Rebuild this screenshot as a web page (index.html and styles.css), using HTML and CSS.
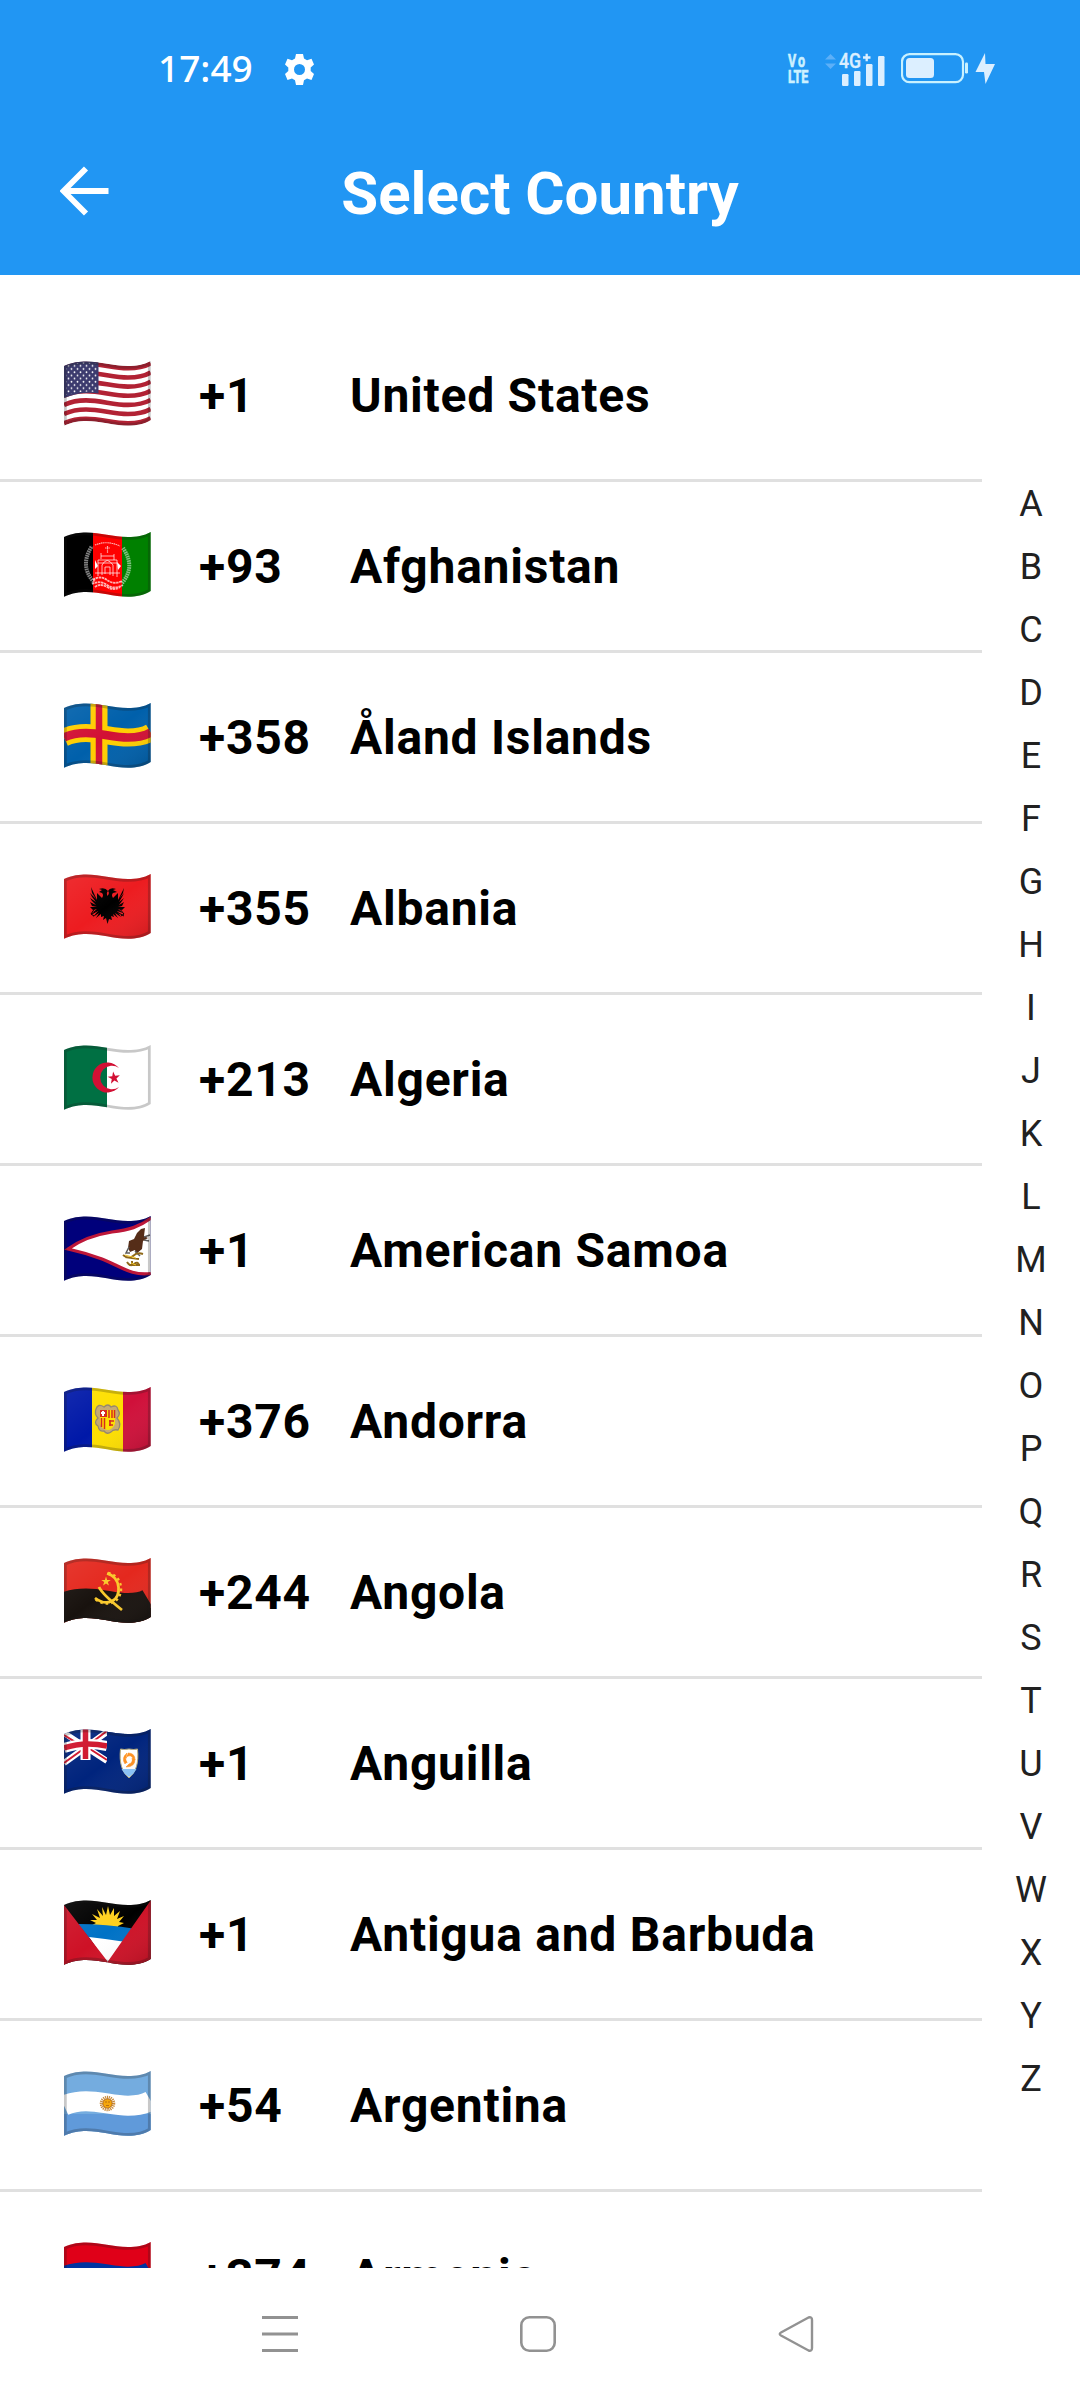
FILE: index.html
```html
<!DOCTYPE html>
<html lang="en">
<head>
<meta charset="utf-8">
<title>Select Country</title>
<link rel="stylesheet" href="styles.css">
</head>
<body>
<svg class="defs" width="0" height="0" aria-hidden="true">
  <defs>
    <clipPath id="cloth"><path d="M0 5C8 1.2 16 .5 22 .5C37 .5 49 5 64 5C72 5 80 4 86.7 0V59C80 63.500 72 64.700 64 64.700C49 64.700 37 60 22 60C16 60 8 61 0 64.700Z"/></clipPath>
    <linearGradient id="sheen" x1="0" y1="0" x2="1" y2="1"><stop offset="0" stop-color="#fff" stop-opacity=".08"/><stop offset=".5" stop-color="#fff" stop-opacity="0"/><stop offset="1" stop-color="#000" stop-opacity=".14"/></linearGradient>
    <path id="wave" d="M0 5C8 1.2 16 .5 22 .5C37 .5 49 5 64 5C72 5 80 4 86.700 0" fill="none"/>
    <path id="edge" d="M0 5C8 1.200 16 .5 22 .5C37 .5 49 5 64 5C72 5 80 4 86.700 0V59C80 63.500 72 64.700 64 64.700C49 64.700 37 60 22 60C16 60 8 61 0 64.700Z" fill="none" stroke="#1a1a1a" stroke-opacity=".24" stroke-width="5.500"/>
    <g id="shade"><path d="M0 0H87V65H0Z" fill="url(#sheen)"/><use href="#edge"/></g>
    <pattern id="stars" width="6" height="6.400" patternUnits="userSpaceOnUse"><circle cx="1.500" cy="1.600" r=".9" fill="#fff"/><circle cx="4.500" cy="4.800" r=".9" fill="#fff"/></pattern>
    <path id="star" d="M0-1L.225-.309H.951L.363.118.588.809 0 .382-.588.809-.363.118-.951-.309H-.225Z"/>
  </defs>
</svg>

<header class="top">
  <div class="status">
    <span class="clock">17:49</span>
    <svg class="gear" viewBox="0 0 29 31"><path fill="#fff" fill-rule="evenodd" d="M11 0H18L19 4.500 22 6.200 26.500 4.700 29 10.500 25.700 13.500V17L29 20 26.500 26 22 24.500 19 26.200 18 31H11L10 26.200 7 24.500 2.500 26 0 20 3.300 17V13.500L0 10.500 2.500 4.700 7 6.200 10 4.500ZM14.500 10A5.500 5.500 0 1 0 14.500 21A5.500 5.500 0 1 0 14.500 10Z"/></svg>
    <div class="indicators">
      <div class="volte"><span class="vo">Vo</span><span>LTE</span></div>
      <div class="signal">
        <svg viewBox="0 0 62 34"><path d="M0 7.500L5.500 2 11 7.500ZM0 11.500L5.500 17 11 11.500Z" fill="#5db0f8"/><g fill="#dcefff"><rect x="17" y="22" width="6.500" height="12" rx="1.200"/><rect x="29" y="19" width="6.500" height="15" rx="1.200"/><rect x="41" y="12" width="6.500" height="22" rx="1.200"/><rect x="53" y="4" width="6.500" height="30" rx="1.200"/></g><path d="M38 5.500H45.500M41.700 1.800V9.300" stroke="#dcefff" stroke-width="2.300"/></svg>
        <span class="net">4G</span>
      </div>
      <svg class="battery" viewBox="0 0 96 32"><rect x="1" y="1.200" width="61" height="28" rx="7.500" fill="none" stroke="#c8f1ff" stroke-width="2.200"/><rect x="5" y="5" width="28" height="20" rx="3.500" fill="#dcefff"/><rect x="64" y="9.500" width="3" height="11" rx="1.200" fill="#c8f1ff"/><path d="M84 0L74.500 19H83L84.500 31 94 11H84.500Z" fill="#dcefff"/></svg>
    </div>
  </div>
  <div class="bar">
    <svg class="back" viewBox="0 0 50 50"><path d="M26 2.500L3.500 25 26 47.500M4 25H48.500" fill="none" stroke="#fff" stroke-width="5.800"/></svg>
    <h1>Select Country</h1>
  </div>
</header>

<main class="content">
  <ul class="countries">
    <li><svg class="flag" viewBox="0 0 87 65"><g clip-path="url(#cloth)"><path fill="#fff" d="M0 0H87V65H0Z"/><g stroke="#b22234" stroke-width="4.580"><use href="#wave" y="2.300"/><use href="#wave" y="11.450"/><use href="#wave" y="20.600"/><use href="#wave" y="29.750"/><use href="#wave" y="38.900"/><use href="#wave" y="48.050"/><use href="#wave" y="57.200"/></g><path d="M0 0H34.500V32.500Q18 30 0 37Z" fill="#3c3b6e"/><path d="M2 5Q18-1 33 3V31Q18 29 2 34Z" fill="url(#stars)"/><use href="#edge"/></g></svg><span class="code">+1</span><span class="name">United States</span></li>

    <li><svg class="flag" viewBox="0 0 87 65"><g clip-path="url(#cloth)"><path d="M0 0H29V65H0Z"/><path fill="#f00" d="M29 0H58V65H29Z"/><path fill="#008000" d="M58 0H87V65H58Z"/><g fill="none" stroke="#fff" stroke-opacity=".7"><path d="M30 50Q15 34 28 14M58 51Q72 35 59 16" stroke-width="4" stroke-opacity=".5" stroke-dasharray="1.600 .7"/><path d="M31 13Q43 8 56 14M41 16H46M43.500 14V21" stroke-width="1.200" stroke-dasharray="1.500 .6"/><path d="M34 44V28H53V45M37 27V21M50 28V22M38 43V33Q43 24 49 33V44M34 31H53M31 41H56M41 42V35H46V43M37 24H50" stroke-width="1"/><path d="M29 48Q36 43 43 48T58 49M28 52Q36 48 43 53T59 53M31 55Q36 51 43 55T56 55" stroke-width="1.800" stroke-dasharray="2.500 .6"/></g><path d="M31 28L34 34 31 37ZM53 30L57 34 54 38Z" fill="#fff"/><use href="#edge"/></g></svg><span class="code">+93</span><span class="name">Afghanistan</span></li>

    <li><svg class="flag" viewBox="0 0 87 65"><g clip-path="url(#cloth)"><path fill="#0060ab" d="M0 0H87V65H0Z"/><path d="M35 0V65" stroke="#ffce00" stroke-width="17"/><use href="#wave" y="29.500" stroke="#ffce00" stroke-width="18"/><path d="M35 0V65" stroke="#d21034" stroke-width="6.500"/><use href="#wave" y="29.500" stroke="#d21034" stroke-width="8.500"/><use href="#shade"/></g></svg><span class="code">+358</span><span class="name">Åland Islands</span></li>

    <li><svg class="flag" viewBox="0 0 87 65"><g clip-path="url(#cloth)"><path fill="#ed1c20" d="M0 0H87V65H0Z"/><path d="M43.500 22Q42 19 44 17Q41 13 35 15L38 16 35 18 38 19Q40 21 38 24L33 19V26L27 13 28 19 32 25 26 19 28 23 32 28 26 24 28 27 32 31 26 28 28 32 33 33 26 33 29 36 33 35 28 39 34 37 29 43 35 39 32 44 37 40 37 43 40 42 39 46 42 44 43.500 50 45 45 48 46 47 42 50 43 49 40 54 44 51 39 57 43 53 37 59 39 54 35 58 36 61 33 54 33 58 32 60 28 55 31 58 27 60 24 55 28 58 23 60 19 55 25 59 19 60 14 54 26V19L49 24Q47 21 49 19L53 18 49 16 52 15Q46 13 44 17Q46 19 43.500 22Z"/><path d="M31 34L27 40 30 42M55 34L60 40 57 42M33 37L28 40M53 38L60 42" fill="none" stroke="#000" stroke-width="1"/><use href="#shade"/></g></svg><span class="code">+355</span><span class="name">Albania</span></li>

    <li><svg class="flag" viewBox="0 0 87 65"><g clip-path="url(#cloth)"><path fill="#fff" d="M0 0H87V65H0Z"/><path fill="#007043" d="M0 0H43V65H0Z"/><path d="M55 23A15 15 0 1 0 55 42A11.800 11.800 0 1 1 55 23Z" fill="#d21034"/><use href="#star" transform="translate(50 33) rotate(-80) scale(6.500)" fill="#d21034"/><use href="#edge"/></g></svg><span class="code">+213</span><span class="name">Algeria</span></li>

    <li><svg class="flag" viewBox="0 0 87 65"><g clip-path="url(#cloth)"><path fill="#00007b" d="M0 0H87V65H0Z"/><path d="M87 2C75 11 65 14 48 16Q22 20 4 33Q22 37 38 43C58 51 67 60 87 57.500" fill="#fff" stroke="#bd1739" stroke-width="3.200"/><path d="M81 12L77 13 73 17 70 23 65 25 64 32 66 36 71 34 72 38 78 33 79 25 84 22 80 20Z" fill="#552d18"/><path d="M65 31L62 37 66 37M80 21L86 19M80 24L85 25M71 35L76 40" stroke="#5d5d5d" stroke-width="1.500" fill="none"/><path d="M59 39Q65 44 69 40T79 38M61 41L75 43M63 46Q66 51 70 48T75 49M65 49H76M68 45V50" stroke="#8f6919" stroke-width="2" fill="none"/><path d="M61 39L72 42M67 47L72 49" stroke="#f5c829" stroke-width="1" fill="none"/><use href="#edge"/></g></svg><span class="code">+1</span><span class="name">American Samoa</span></li>

    <li><svg class="flag" viewBox="0 0 87 65"><g clip-path="url(#cloth)"><path fill="#0018a8" d="M0 0H28V65H0Z"/><path fill="#fedf00" d="M28 0H59V65H28Z"/><path fill="#d0103a" d="M59 0H87V65H59Z"/><path d="M32 22Q34 16 40 20Q44 16 47 20Q53 17 54 23Q57 27 53 31Q58 37 54 43Q49 42 47 45Q43 48 40 44Q35 45 34 39Q29 36 34 31Q30 27 32 22Z" fill="#c6aa70" stroke="#95866c" stroke-width="1.300"/><path d="M36 23H51V37Q48 43 43.500 43Q37 42 36 36Z" fill="#fedf00"/><path d="M36 23H43V30H36Z" fill="#d52b1e"/><path d="M37.500 31V40M40.500 31V42M45 23V31M48 23V31M50.500 23V31" stroke="#d52b1e" stroke-width="1.500"/><path d="M37 26H41M39 24V29" stroke="#fff" stroke-width="2"/><path d="M45 34H50M45 38H49M46 33V39" stroke="#d52b1e" stroke-width="1.700"/><use href="#shade"/></g></svg><span class="code">+376</span><span class="name">Andorra</span></li>

    <li><svg class="flag" viewBox="0 0 87 65"><g clip-path="url(#cloth)"><path fill="#e4281e" d="M0 0H87V65H0Z"/><use href="#wave" y="46" stroke="#18120e" stroke-width="32"/><path fill="#18120e" d="M0 50H87V65H0Z"/><path d="M43 15.500C57 19 58 39 48 43Q40 47 31 40" fill="none" stroke="#fac92c" stroke-width="2.800"/><path d="M44 15C60 18 61 39 49 44.500Q40 48 31 41" fill="none" stroke="#fac92c" stroke-width="2.300" stroke-dasharray="2.500 3"/><path d="M35 29Q38 36 58 52" stroke="#fac92c" stroke-width="2.800" fill="none"/><use href="#star" transform="translate(42 23.500) scale(5)" fill="#fac92c"/><use href="#shade"/></g></svg><span class="code">+244</span><span class="name">Angola</span></li>

    <li><svg class="flag" viewBox="0 0 87 65"><g clip-path="url(#cloth)"><path fill="#00247d" d="M0 0H87V65H0Z"/><path d="M0 4L43 32M0 34L43 3" stroke="#fff" stroke-width="6"/><path d="M0 6L18 17M26 20L43 31M0 34L18 21M27 14L43 2" stroke="#cf142b" stroke-width="2"/><path d="M21.500 0V31" stroke="#fff" stroke-width="10"/><path d="M0 19Q20 12 43 17" fill="none" stroke="#fff" stroke-width="10"/><path d="M21.500 0V30" stroke="#cf142b" stroke-width="5.500"/><path d="M0 19Q20 12 43 17" fill="none" stroke="#cf142b" stroke-width="5.500"/><path fill="#00247d" d="M43 0H60V40H43Z"/><path d="M56.500 20Q60 21 65 20Q70 21 73.500 20C75 34 72 43 65 49C58 43 55 34 56.500 20Z" fill="#fff" stroke="#b9ad7b" stroke-width="1"/><path d="M57.500 40H72.500Q70 45 65 48Q60 45 57.500 40Z" fill="#8bc5fa"/><path d="M61 35Q57 29 63 24L62 28Q61 31 64 33M64 24Q71 24 71 31L68 28Q65 25 62 29M71 30Q71 38 62 38L65 35Q69 34 68 29" fill="#ff901e" stroke="#ff901e" stroke-width=".6"/><circle cx="65" cy="31" r="2.500" fill="#fff"/><use href="#shade"/></g></svg><span class="code">+1</span><span class="name">Anguilla</span></li>

    <li><svg class="flag" viewBox="0 0 87 65"><g clip-path="url(#cloth)"><path d="M0 0H87V65H0Z"/><path d="M26 26L32 23 26 20 33 20 28 14 36 18 33 9 39 16 38 7 42 15 44 6 46 15 50 8 50 16 56 11 53 19 60 16 55 22 60 23 54 26 54 30Z" fill="#ffd01e"/><path d="M14 24Q42 24 72 29L62 43Q43 40 25 38Z" fill="#0072c6"/><path d="M25 37Q43 39 62 42L44 65Z" fill="#fff"/><path d="M0 5L44 62V65H0ZM87 0L43.500 62V65H87Z" fill="#ce1126"/><use href="#shade"/></g></svg><span class="code">+1</span><span class="name">Antigua and Barbuda</span></li>

    <li><svg class="flag" viewBox="0 0 87 65"><g clip-path="url(#cloth)"><path fill="#74acdf" d="M0 0H87V65H0Z"/><path fill="#609ada" d="M0 43H87V65H0Z"/><use href="#wave" y="29.700" stroke="#fff" stroke-width="20"/><circle cx="43.500" cy="32.500" r="6" fill="none" stroke="#c88a3c" stroke-width="3.500" stroke-dasharray="1.100 .7"/><circle cx="43.500" cy="32.500" r="4.600" fill="#f6a70b" stroke="#a86112" stroke-width=".8"/><path d="M41 31H43M44 31H46M42 34.500H45" stroke="#a86112" stroke-width=".8"/><use href="#edge"/></g></svg><span class="code">+54</span><span class="name">Argentina</span></li>

    <li><svg class="flag" viewBox="0 0 87 65"><g clip-path="url(#cloth)"><path fill="#e00018" d="M0 0H87V65H0Z"/><use href="#wave" y="29.700" stroke="#0033a0" stroke-width="20"/><use href="#wave" y="50" stroke="#f2a800" stroke-width="20"/><use href="#edge"/></g></svg><span class="code">+374</span><span class="name">Armenia</span></li>
  </ul>
  <nav class="index">
    <span>A</span><span>B</span><span>C</span><span>D</span><span>E</span><span>F</span><span>G</span><span>H</span><span>I</span><span>J</span><span>K</span><span>L</span><span>M</span><span>N</span><span>O</span><span>P</span><span>Q</span><span>R</span><span>S</span><span>T</span><span>U</span><span>V</span><span>W</span><span>X</span><span>Y</span><span>Z</span>
  </nav>
</main>

<footer class="navbar">
  <svg viewBox="0 0 38 38"><path d="M1 2.500H37M1 19H37M1 35.500H37" stroke="#929292" stroke-width="3"/></svg>
  <svg viewBox="0 0 38 38"><rect x="2.300" y="2.300" width="33.400" height="33.400" rx="8" fill="none" stroke="#929292" stroke-width="2.600"/></svg>
  <svg viewBox="0 0 38 38"><path d="M31.500 2.500L4 17.500Q1.500 19 4 20.500L31.500 35.500Q35 36.500 35 33V5Q35 1.500 31.500 2.500Z" fill="none" stroke="#929292" stroke-width="2.400"/></svg>
</footer>
</body>
</html>
```

FILE: styles.css
```css
* { box-sizing: border-box; }

body {
  margin: 0;
  width: 1080px;
  height: 2400px;
  display: flex;
  flex-direction: column;
  background: #fff;
  color: #000;
  font-family: Roboto, "Noto Sans", sans-serif;
  overflow: hidden;
}

.defs { display: block; width: 0; height: 0; flex: none; }

svg { display: block; flex: none; }

/* Header: system status and app bar */
.top {
  height: 275px;
  flex: none;
  background: #2196f3;
  color: #fff;
}

.status {
  height: 112px;
  padding: 26px 83px 0 158px;
  display: flex;
  align-items: center;
}

.clock {
  font: 500 37px/40px "Noto Sans", sans-serif;
  width: 127px;
  padding-bottom: 2px;
}

.gear { width: 29px; height: 31px; }

.indicators {
  margin-left: auto;
  display: flex;
  align-items: center;
}

.volte {
  width: 37px;
  display: flex;
  flex-direction: column;
  font: 700 19px/16px Roboto, sans-serif;
  color: #cdf1ff;
  -webkit-text-stroke: .7px #cdf1ff;
  transform: scaleX(.66);
  transform-origin: left;
}

.vo { letter-spacing: 3px; }

.signal { position: relative; width: 62px; height: 34px; margin-right: 14px; }
.signal svg { width: 62px; height: 34px; }

.net {
  position: absolute;
  left: 14px;
  top: 0;
  font: 500 21px/18px Roboto, sans-serif;
  color: #dcefff;
  -webkit-text-stroke: .4px #dcefff;
  transform: scaleX(.84);
  transform-origin: left;
}

.battery { width: 96px; height: 32px; }

.bar {
  height: 163px;
  padding: 0 60px;
  display: grid;
  grid-template-columns: 50px 1fr 50px;
  align-items: center;
}

.back { width: 50px; height: 50px; margin-bottom: 5px; }

h1 {
  margin: 0;
  font-size: 60px;
  line-height: 70px;
  font-weight: 700;
  text-align: center;
}

/* Country list with letter index */
.content {
  height: 1993px;
  flex: none;
  display: flex;
  overflow: hidden;
}

.countries {
  list-style: none;
  margin: 0;
  padding: 36px 0 0;
  width: 982px;
}

.countries li {
  height: 171px;
  padding: 2px 0 0 64px;
  display: flex;
  align-items: center;
  border-bottom: 3px solid #e0e0e0;
  font-size: 48px;
  line-height: 56px;
  font-weight: 700;
  letter-spacing: .75px;
  white-space: nowrap;
}

.flag { width: 87px; height: 65px; margin: 0 48px 5px 0; }
.code { width: 151px; }

.index {
  width: 98px;
  padding-top: 198px;
  display: flex;
  flex-direction: column;
  align-items: center;
  font-size: 36px;
  line-height: 63px;
  color: #212121;
}

/* System navigation */
.navbar {
  height: 132px;
  padding: 0 265px 0 261px;
  display: flex;
  align-items: center;
  justify-content: space-between;
}

.navbar svg { width: 38px; height: 38px; }
```
